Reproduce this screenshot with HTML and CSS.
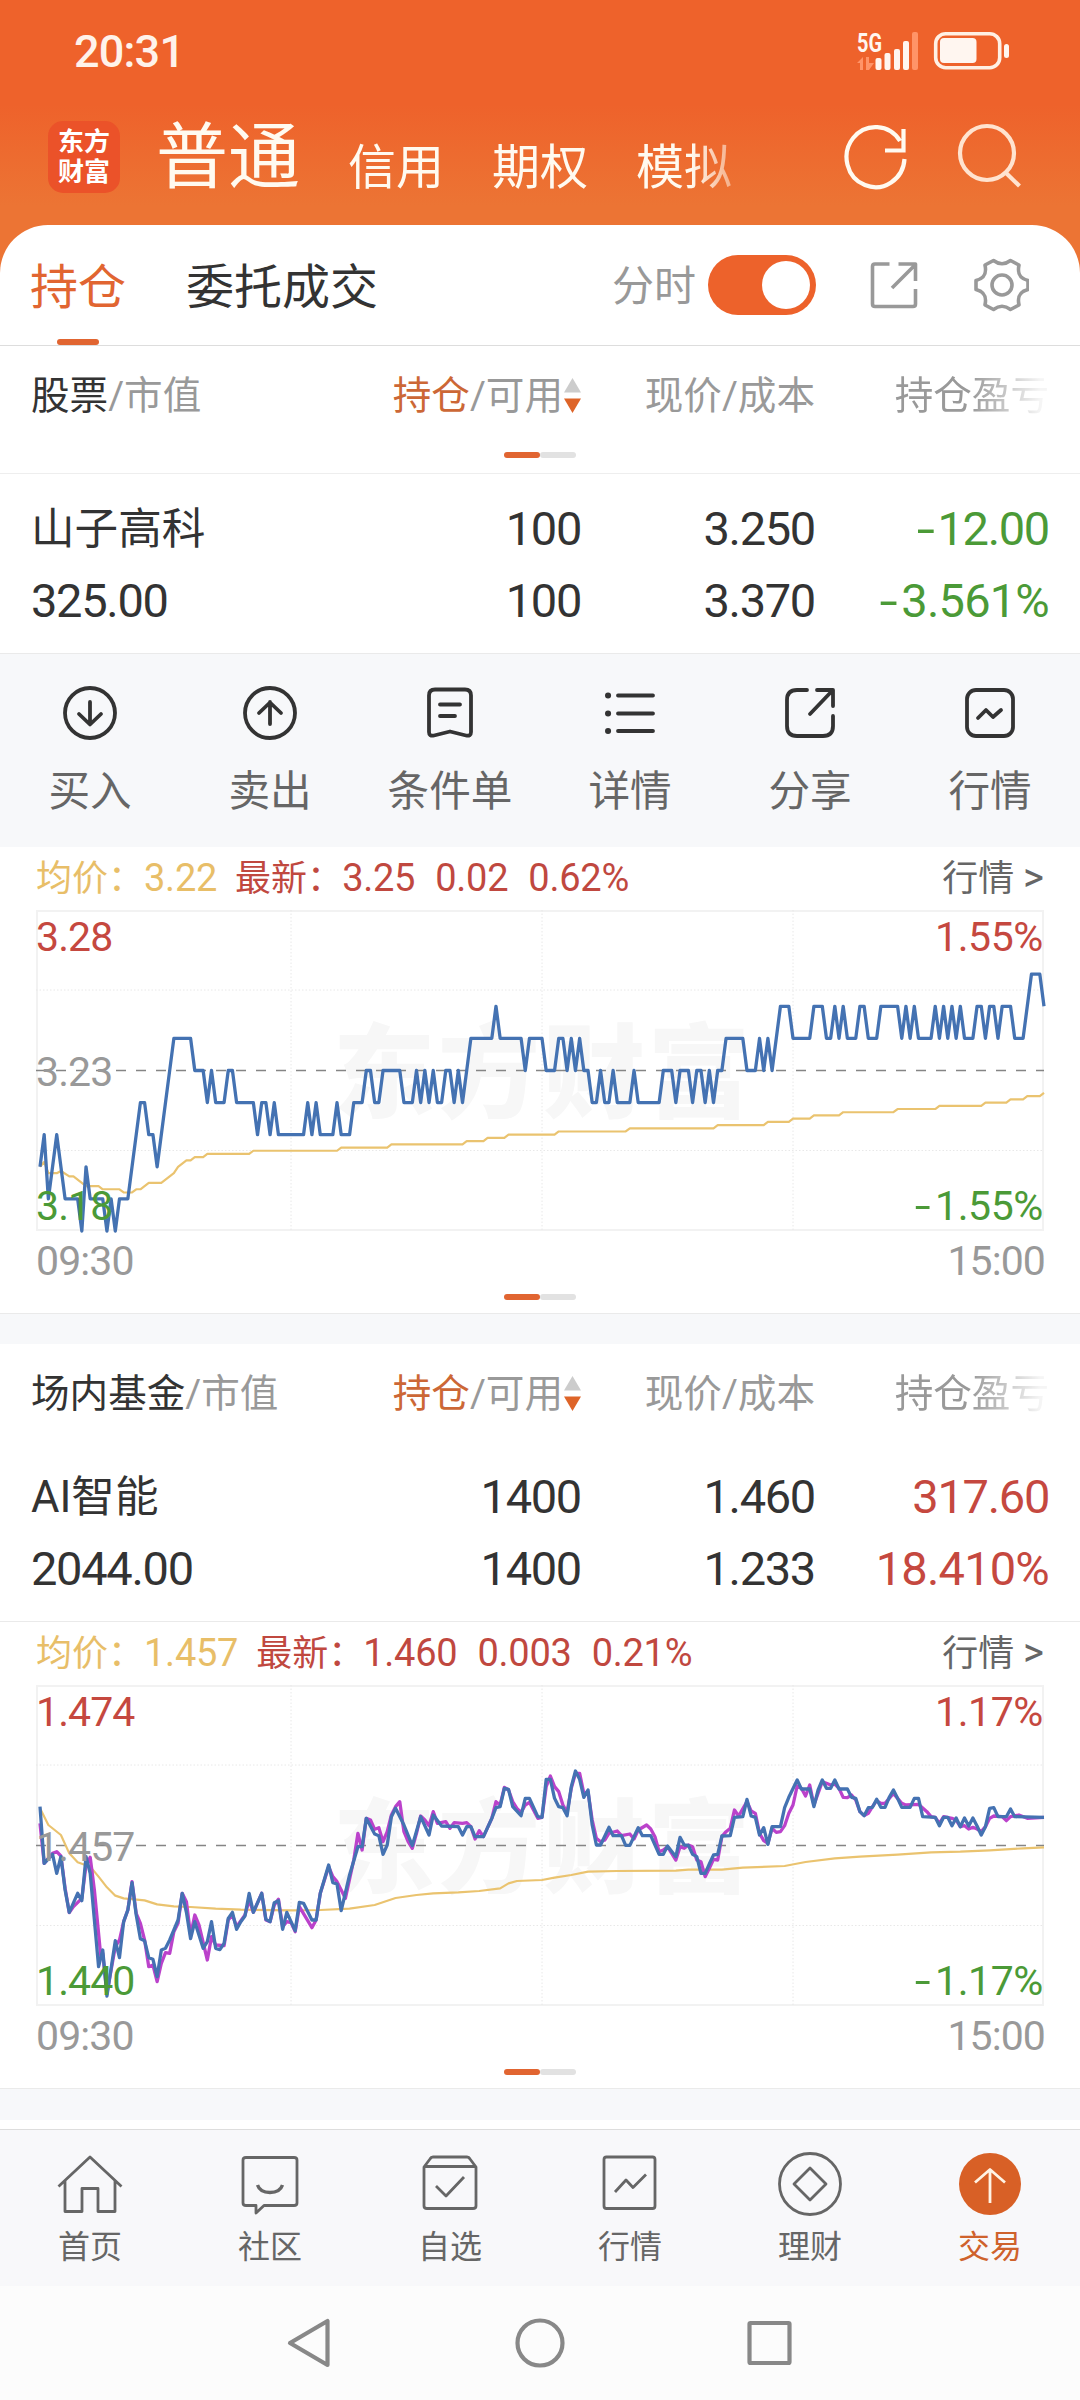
FILE: index.html
```html
<!DOCTYPE html>
<html lang="zh-CN">
<head>
<meta charset="utf-8">
<title>持仓</title>
<link rel="stylesheet" href="styles.css">
</head>
<body>
<header class="top">
  <div class="status">
    <span class="clock">20:31</span>
    <svg class="status-icons" width="160" height="40" viewBox="850 31 160 40">
      <text class="net" x="857" y="51.500" textLength="25" lengthAdjust="spacingAndGlyphs">5G</text>
      <g fill="#ff9468"><path d="M857 63l6-6v13h-3v-7zM866 57h3v6l5 0-5 7h-3z"/><rect x="912" y="32" width="6" height="38" rx="2"/></g>
      <g fill="#fff6f0"><rect x="875.500" y="58" width="6" height="12" rx="2"/><rect x="884.500" y="53" width="6" height="17" rx="2"/><rect x="894" y="49" width="6" height="21" rx="2"/><rect x="903" y="41" width="6" height="29" rx="2"/>
      <rect x="940" y="38" width="36.500" height="25" rx="4"/><rect x="1004" y="44" width="5" height="14" rx="2.500"/></g>
      <rect x="935.700" y="33.700" width="64" height="34" rx="10" fill="none" stroke="#fff0e4" stroke-width="3.600"/>
    </svg>
  </div>
  <div class="accounts">
    <div class="logo">东方<br>财富</div>
    <nav class="account-tabs"><b>普通</b><span>信用</span><span>期权</span><span>模拟</span></nav>
    <svg class="top-icons" width="180" height="72" viewBox="842 122 180 72" fill="none" stroke-width="4.200">
      <path stroke="#fffaf0" d="M904.500 160A29 30 0 1 1 900 142M903.500 130v21.500H885"/>
      <g stroke="#ffe3cf"><circle cx="987" cy="154" r="27"/><path d="M1005 173l14.500 14"/></g>
    </svg>
  </div>
</header>

<main>
  <div class="tabs">
    <span class="tab active">持仓</span><span class="tab">委托成交</span>
    <span class="minute">分时</span>
    <span class="toggle"></span>
    <svg class="tab-icons" width="160" height="60" viewBox="869 255 160 60" fill="none" stroke="#999" stroke-width="3.600" stroke-linejoin="round">
      <path d="M889.500 264H875q-2.500 0-2.500 2.500V304q0 2.500 2.500 2.500H913q2.500 0 2.500-2.500V289M898.500 264H915.500V281M915 265L892 288"/>
      <circle cx="1002" cy="285" r="10"/>
      <path d="M985 265L993.500 260.500Q1002 267 1010.500 260.500L1019 265C1017.500 272 1018.500 278 1028 280.500V289.500C1018.500 292 1017.500 298 1019 305L1010.500 309.500Q1002 303 993.500 309.500L985 305C986.500 298 985.500 292 976 289.500V280.500C985.500 278 986.500 272 985 265Z"/>
    </svg>
  </div>

  <section class="stock">
    <div class="cols head">
      <span><i>股票</i>/市值</span><span class="sorted"><em>持仓</em>/可用<svg width="17" height="36" viewBox="0 0 17 36"><path d="M8.500 0L17 14.500H0Z" fill="#ccc"/><path d="M8.500 35L17 20.500H0Z" fill="#de6428"/></svg></span><span>现价/成本</span><span class="fade">持仓盈亏</span>
    </div>
    <div class="pager"><i></i><i></i></div>
    <div class="holding">
      <div class="cols num"><span class="name">山子高科</span><span>100</span><span>3.250</span><span class="down"><s>-</s>12.00</span></div>
      <div class="cols num"><span>325.00</span><span>100</span><span>3.370</span><span class="down rate"><s>-</s>3.561%</span></div>
    </div>
    <div class="actions">
      <a><svg width="60" height="60" viewBox="-30 -30 60 60"><circle r="25"/><path d="M0-11V11M-11 1L0 11.500 11 1"/></svg>买入</a>
      <a><svg width="60" height="60" viewBox="-30 -30 60 60"><circle r="25"/><path d="M0 11V-11M-11 0L0-10.500 11 0"/></svg>卖出</a>
      <a><svg width="60" height="60" viewBox="-30 -30 60 60"><path d="M-15-23.500H15Q21-23.500 21-17.500V19Q21 23.500 16 22.500L0 18.500-16 22.500Q-21 23.500-21 19V-17.500Q-21-23.500-15-23.500ZM-10-8.500H10M-10 3H5"/></svg>条件单</a>
      <a><svg width="60" height="60" viewBox="-30 -30 60 60"><path d="M-12-17.500H23M-12 .5H23M-12 18H23"/><path stroke-width="6" d="M-22-17.500h.1M-22 .5h.1M-22 18h.1"/></svg>详情</a>
      <a><svg width="60" height="60" viewBox="-30 -30 60 60"><path d="M-3-23H-13Q-23-23-23-13V13Q-23 23-13 23H13Q23 23 23 13V3M7-23H23V-7M22-22L0 1"/></svg>分享</a>
      <a><svg width="60" height="60" viewBox="-30 -30 60 60"><rect x="-23" y="-23" width="46" height="46" rx="9"/><path d="M-12 5L-4-3 3 4 11-3"/></svg>行情</a>
    </div>
    <div class="legend"><span class="avg">均价：<b>3.22</b></span><span class="last">最新：<b>3.25</b><b>0.02</b><b>0.62%</b></span><span class="more">行情 <i>&gt;</i></span></div>
    <div class="chart">
      <div class="watermark">东方财富</div>
      <svg class="grid" width="1008" height="321"><path class="dots" d="M255 0V321M506 0V321M757 0V321M0 80H1008M0 240.500H1008"/><path class="mid" d="M0 160.500H1008"/></svg>
      <svg class="series" viewBox="0 -5 240 10" preserveAspectRatio="none">
        <polyline class="avg-line" points="0,3 1,2.850 2,3.200 4,3.200 5,3.130 7,3.300 8,3.300 11,3.600 14,3.600 15,3.700 19,3.700 20,3.800 22,3.800 23,3.700 24,3.700 26,3.500 29,3.500 32,3.200 33,3 35,2.800 36,2.800 37,2.700 39,2.700 40,2.600 50,2.600 51,2.500 71,2.500 72,2.400 83,2.400 84,2.300 101,2.300 102,2.200 106,2.200 107,2.100 111,2.100 112,2 123,2 124,1.900 140,1.900 141,1.800 161,1.800 162,1.700 173,1.700 174,1.600 179,1.600 180,1.500 184,1.500 185,1.400 191,1.400 192,1.300 204,1.300 205,1.200 214,1.200 215,1.100 225,1.100 226,1 231,1 232,.9 235,.9 236,.8 239,.8 240,.7"/>
        <polyline class="price-line" points="0,3 1,2 2,4 4,2 6,4 9,4 10,5 11,3 12,4 15,4 16,5 17,4 18,5 19,4 21,4 24,1 25,1 26,2 27,2 28,3 32,-1 36,-1 37,0 39,0 40,1 41,0 42,1 44,1 45,0 46,0 47,1 51,1 52,2 53,1 54,1 55,2 56,1 57,2 63,2 64,1 65,2 66,1 67,2 70,2 71,1 72,2 74,2 75,1 77,1 78,0 79,0 80,1 81,1 82,0 86,0 87,1 89,1 90,0 91,1 92,0 93,1 94,0 95,1 96,1 97,0 98,0 99,1 100,0 101,1 103,-1 108,-1 109,-2 110,-1 115,-1 116,0 117,-1 120,-1 121,0 123,0 124,-1 125,-1 126,0 127,-1 128,0 129,-1 130,0 131,0 132,1 133,1 134,0 135,1 136,1 137,0 138,1 141,1 142,0 143,1 148,1 149,0 151,0 152,1 153,0 155,0 156,1 157,0 158,0 159,1 160,0 161,1 162,0 163,0 164,-1 168,-1 169,0 171,0 172,-1 173,0 174,-1 175,0 177,-2 179,-2 180,-1 184,-1 185,-2 187,-2 188,-1 189,-1 190,-2 191,-1 192,-2 193,-1 195,-1 196,-2 197,-2 198,-1 200,-1 201,-2 205,-2 206,-1 207,-2 208,-1 209,-2 210,-1 213,-1 214,-2 215,-1 216,-2 217,-1 218,-2 219,-1 220,-2 221,-1 223,-1 224,-2 225,-2 226,-1 227,-2 228,-2 229,-1 230,-2 232,-2 233,-1 235,-1 237,-3 239,-3 240,-2"/>
      </svg>
      <div class="scale left"><span class="up">3.28</span><span>3.23</span><span class="down">3.18</span></div>
      <div class="scale right"><span class="up">1.55%</span><span class="down"><s>-</s>1.55%</span></div>
    </div>
    <div class="times"><span>09:30</span><span>15:00</span></div>
    <div class="pager end"><i></i><i></i></div>
  </section>

  <section class="stock fund">
    <div class="cols head">
      <span><i>场内基金</i>/市值</span><span class="sorted"><em>持仓</em>/可用<svg width="17" height="36" viewBox="0 0 17 36"><path d="M8.500 0L17 14.500H0Z" fill="#ccc"/><path d="M8.500 35L17 20.500H0Z" fill="#de6428"/></svg></span><span>现价/成本</span><span class="fade">持仓盈亏</span>
    </div>
    <div class="holding">
      <div class="cols num"><span class="name">AI智能</span><span>1400</span><span>1.460</span><span class="up">317.60</span></div>
      <div class="cols num"><span>2044.00</span><span>1400</span><span>1.233</span><span class="up rate">18.410%</span></div>
    </div>
    <div class="legend"><span class="avg">均价：<b>1.457</b></span><span class="last">最新：<b>1.460</b><b>0.003</b><b>0.21%</b></span><span class="more">行情 <i>&gt;</i></span></div>
    <div class="chart">
      <div class="watermark">东方财富</div>
      <svg class="grid" width="1008" height="321"><path class="dots" d="M255 0V321M506 0V321M757 0V321M0 80H1008M0 240.500H1008"/><path class="mid" d="M0 160.500H1008"/></svg>
      <svg class="series" viewBox="0 75 240 963" preserveAspectRatio="none">
        <polyline class="avg-line" points="0,445 2,495 5,525 7,580 9,607 12,620 14,650 16,682 18,707 20,715 25,721 28,733 32,739 36,741 42,746 48,749 60,751 67,750 74,746 80,735 85,714 90,705 94,700 100,697 105,693 110,685 112,670 114,663 120,660 123,653 127,645 131,635 138,633 152,632 155,629 163,629 168,623 178,618 183,606 190,595 196,590 205,584 213,577 220,575 227,571 235,565 240,562"/>
        <polyline class="nav-line" points="0,490 1,610 3,580 4,575 5,588 6,685 7,758 8,740 10,715 11,615 12,592 13,690 14.500,885 15,880 16,1000 18,860 19,840 20,785 21,750 22,665 23,760 24,790 25,840 26,920 27,915 28,965 29,910 30,878 31,880 32,815 33,790 34,700 35,725 36,825 37,765 38,795 40,900 41,830 42,855 44,857 45,780 46,765 47,800 49,765 50,720 51,757 53,700 54,780 55,785 56,735 57,718 58,800 59,785 60,788 61,815 62,740 65,803 66,780 67,700 69,620 70,650 71,665 73,715 75,600 76,520 77,570 78,475 79,480 80,508 81,503 82,545 83,515 84,465 85,440 86,425 87,515 88,545 89,565 90,520 91,468 92,480 93,497 94,455 95,490 97,485 98,505 99,488 101,490 102,488 103,500 104,537 105,512 106,530 108,475 109,425 110,435 111,382 112,390 113,425 114,445 115,457 116,435 117,427 119,475 120,472 121,380 122,348 123,380 124,395 125,435 126,457 127,385 128,340 129,340 130,400 131,395 132,480 133,535 134,545 135,540 136,520 138,513 139,527 141,522 142,537 143,510 145,495 146,507 147,530 148,575 149,570 150,560 151,580 152,600 153,560 154,565 155,555 156,560 157,600 158,605 159,650 160,625 161,598 162,600 163,530 164,515 165,505 166,450 167,468 169,425 170,453 171,460 172,520 173,542 174,550 175,505 176,517 177,515 178,497 179,460 180,435 181,378 182,385 183,408 184,375 185,435 187,365 188,370 189,375 190,372 191,385 192,412 193,413 194,405 195,420 196,455 197,467 198,460 199,440 200,422 201,430 202,430 203,415 204,400 205,415 206,430 207,435 210,433 212,455 213,470 214,472 215,490 216,470 218,475 219,480 220,500 221,497 222,507 223,502 224,507 225,515 226,500 227,475 228,468 230,470 231,482 232,470 234,465 236,475 240,472"/>
        <polyline class="price-line" points="0,440 1,610 3,583 4,640 5,590 6,690 7,757 9,700 10,722 11,590 12,640 14,920 15,870 16,1008 18,842 19,893 20,785 21,750 22,668 23,765 24,836 25,842 26,893 27,898 28,950 29,870 30,865 31,840 32,810 33,780 34,700 35,757 36,836 37,785 39,865 40,845 41,785 42,865 43,869 44,850 45,775 46,757 47,808 48,785 49,768 50,700 51,757 53,700 54,778 55,785 56,728 57,722 58,808 59,757 61,812 62,727 63,730 65,780 66,780 67,700 69,615 70,668 71,672 72,752 74,645 76,560 77,560 78,475 80,522 81,527 82,583 83,555 84,470 85,445 87,495 89,557 91,470 93,525 94,465 96,498 100,500 101,525 102,500 103,500 104,530 106,530 108,475 109,443 110,440 111,385 112,388 113,440 115,467 116,415 117,415 119,470 120,472 121,358 122,358 123,415 124,440 125,443 126,467 127,380 128,333 129,358 130,412 131,390 132,495 133,555 134,555 136,502 137,527 139,527 140,556 141,556 143,503 144,527 146,527 148,583 149,583 150,558 152,590 153,532 154,555 155,556 156,583 157,590 158,640 159,640 160,612 161,585 162,583 163,528 165,527 166,472 168,470 169,418 170,468 171,472 172,525 173,503 174,553 175,500 177,500 178,443 179,412 181,360 182,387 184,387 185,440 186,390 187,360 188,385 189,385 190,360 191,387 193,387 194,412 195,415 196,455 197,467 198,443 199,442 200,418 201,442 202,442 203,412 204,390 205,415 206,442 208,442 209,415 210,415 211,470 214,472 215,497 216,472 217,472 218,497 219,474 220,500 221,474 222,498 223,474 224,498 225,525 226,500 227,445 228,443 229,470 231,470 232,447 233,470 240,472"/>
      </svg>
      <div class="scale left"><span class="up">1.474</span><span>1.457</span><span class="down">1.440</span></div>
      <div class="scale right"><span class="up">1.17%</span><span class="down"><s>-</s>1.17%</span></div>
    </div>
    <div class="times"><span>09:30</span><span>15:00</span></div>
    <div class="pager end"><i></i><i></i></div>
  </section>
  <div class="next"></div>
</main>

<nav class="tabbar">
  <a><svg width="70" height="70" viewBox="-35 -35 70 70"><path d="M-31.500 2.500L0-27 31.500 2.500M-25-3V27.500H-8V4.500H8V27.500H25V-3"/></svg>首页</a>
  <a><svg width="70" height="70" viewBox="-35 -35 70 70"><path d="M-24-26.500H24Q27-26.500 27-24V19Q27 21.500 24 21.500H-6L-14 29V21.500H-24Q-27 21.500-27 19V-24Q-27-26.500-24-26.500Z"/><path stroke-width="3.400" d="M-12.500 1Q-10 8.500 0 8.500T12.500 1"/></svg>社区</a>
  <a><svg width="70" height="70" viewBox="-35 -35 70 70"><path d="M-26-17L-20-25Q-19-27-17-27H17Q19-27 20-25L26-17V22Q26 24.500 23 24.500H-23Q-26 24.500-26 22ZM-26-17.500H26M-14 2L-4 12 14-7"/></svg>自选</a>
  <a><svg width="70" height="70" viewBox="-35 -35 70 70"><rect x="-26" y="-27" width="51" height="51.500" rx="2.500"/><path d="M-15 8L-4-4 3 3.500 16-9.500"/></svg>行情</a>
  <a><svg width="70" height="70" viewBox="-35 -35 70 70"><circle r="30.500"/><path d="M0-16L16 0 0 16-16 0Z"/></svg>理财</a>
  <a class="on"><svg width="70" height="70" viewBox="-35 -35 70 70"><circle r="31" fill="#d86026" stroke="none"/><path stroke="#fff3e4" d="M0 19V-14.500M-15-1.500L0-14.500 15-1.500"/></svg>交易</a>
</nav>
<div class="sysnav">
  <svg width="560" height="60" viewBox="260 2313 560 60" fill="none" stroke="#888" stroke-width="4.200" stroke-linejoin="round"><path d="M290 2343L327.500 2321V2365Z"/><circle cx="540" cy="2343" r="22.500"/><rect x="749.500" y="2323" width="40" height="40" rx="1"/></svg>
</div>
</body>
</html>
```
FILE: styles.css
```css
* { box-sizing: border-box; }
body {
  margin: 0; width: 1080px; height: 2400px; overflow: hidden; background: #fff;
  font-family: Roboto, "Noto Sans CJK SC", sans-serif; color: #333;
  display: flex; flex-direction: column;
}
i, em { font-style: normal; }
b { font-weight: 400; }
s { text-decoration: none; display: inline-block; transform: scaleX(1.4); margin-right: 7px; }
.up { color: #c5483f; }
.down { color: #4b9a37; }

.top { height: 273px; flex: none; margin-bottom: -48px; background: linear-gradient(#ee622b 0, #ee622b 105px, #ec7434 205px, #ec7434); }
.status { height: 101px; padding: 0 70px 0 74px; display: flex; justify-content: space-between; align-items: center; }
.clock { font-size: 45px; font-weight: 500; color: #fff2ea; letter-spacing: -.8px; padding-top: 1px; }
.net { font: 700 26px Roboto, sans-serif; fill: #fff6f0; }
.accounts { height: 112px; display: flex; align-items: center; padding-left: 48px; }
.logo { width: 72px; height: 72px; border-radius: 15px; background: #eb5229; color: #fff; font: 700 26px/30px "Noto Sans CJK SC", sans-serif; padding-top: 4px; text-align: center; }
.account-tabs { margin-left: 36px; width: 580px; height: 112px; padding-top: 5px; display: flex; gap: 48px; align-items: baseline; font-size: 48px; line-height: 100px; color: #fffaf0; white-space: nowrap; -webkit-mask: linear-gradient(90deg, #000 535px, rgba(0,0,0,.4) 580px); mask: linear-gradient(90deg, #000 535px, rgba(0,0,0,.4) 580px); }
.account-tabs b { font-size: 72px; line-height: 104px; }
.account-tabs span { transform: translateY(2px); }
.top-icons { margin-left: auto; margin-right: 58px; }

main { flex: none; height: 1904px; background: #fff; border-radius: 48px 48px 0 0; overflow: hidden; }
.tabs { height: 121px; border-bottom: 1px solid #ddd; display: flex; align-items: center; padding: 0 51px 0 30px; font-size: 48px; position: relative; }
.tab, .minute { padding-bottom: 5px; }
.tab + .tab { margin-left: 60px; }
.tab.active { color: #e16531; }
.tab.active::after { content: ""; position: absolute; left: 57px; bottom: 0; width: 42px; height: 6px; border-radius: 3px; background: #e16531; }
.minute { margin-left: auto; font-size: 42px; color: #999; }
.toggle { width: 108px; height: 60px; margin: 0 53px 0 12px; border-radius: 30px; background: #ed622b; padding: 6px; display: flex; justify-content: flex-end; }
.toggle::after { content: ""; width: 48px; height: 48px; border-radius: 50%; background: #fff; }

.stock { border-bottom: 1px solid #eaeaea; }
.cols { display: grid; grid-template-columns: 1fr 234px 234px 234px; padding: 0 31px; }
.cols > * { text-align: right; white-space: nowrap; }
.cols > :first-child { text-align: left; }
.head { height: 98px; font-size: 38.600px; line-height: 100px; color: #999; }
.head i { color: #333; }
.head em { color: #cc6736; }
.sorted { display: flex; justify-content: flex-end; align-items: center; }
.sorted svg { margin-left: 1px; }
.fade { -webkit-mask: linear-gradient(90deg, #000 155px, rgba(0,0,0,.1) 225px); mask: linear-gradient(90deg, #000 155px, rgba(0,0,0,.1) 225px); }
.pager { height: 30px; display: flex; justify-content: center; align-items: center; border-bottom: 1px solid #eee; padding-bottom: 7px; }
.pager i { width: 36px; height: 6px; border-radius: 3px; background: #e2e2e2; }
.pager i:first-child { background: #e16531; }
.holding { height: 180px; padding-top: 19px; border-bottom: 1px solid #eaeaea; }
.num { height: 72px; line-height: 72px; font-size: 47px; letter-spacing: -1.300px; }
.num .rate { letter-spacing: -.8px; }
.num .name { font-size: 43.600px; letter-spacing: 0; line-height: 74px; }
.actions { height: 193px; background: #f7f8fa; display: grid; grid-template-columns: repeat(6, 180px); padding-top: 29px; }
.actions a { display: flex; flex-direction: column; align-items: center; font-size: 41.600px; line-height: 60px; gap: 19px; color: #666; }
.actions svg { fill: none; stroke: #333; stroke-width: 3.800; stroke-linecap: round; stroke-linejoin: round; }
.legend { height: 63px; display: flex; padding: 0 36px; font-size: 36px; line-height: 62px; }
.legend b { font-size: 38px; margin-right: 20px; letter-spacing: -.25px; }
.legend .avg b { margin-right: 18px; }
.avg { color: #e8be68; }
.last { color: #c0483f; }
.last b:first-of-type { margin-left: -1px; }
.more { margin-left: auto; color: #666; }
.more i { font-size: 40px; }
.chart { height: 321px; margin: 0 36px; position: relative; box-shadow: inset 0 0 0 2px #f2f2f2; }
.watermark { position: absolute; inset: 0; display: flex; justify-content: center; align-items: center; font: 900 102px/1 "Noto Sans CJK SC", sans-serif; letter-spacing: 3px; padding: 0 0 10px 6px; color: #f7f7f7; }
.grid, .series { position: absolute; left: 0; top: 0; overflow: visible; fill: none; }
.dots { stroke: #e8e8e8; stroke-dasharray: 1.500 2; }
.mid { stroke: #858585; stroke-width: 1.300; stroke-dasharray: 10 10; }
.series { left: 4px; width: 1004px; height: 321px; }
.series polyline { vector-effect: non-scaling-stroke; stroke-linejoin: round; }
.avg-line { stroke: #eac36f; stroke-width: 2.200; }
.price-line { stroke: #4472b2; stroke-width: 3.300; }
.nav-line { stroke: #bb42cb; stroke-width: 3.300; }
.scale { position: absolute; top: 3px; bottom: 1px; display: flex; flex-direction: column; justify-content: space-between; font-size: 41px; line-height: 48px; letter-spacing: -.9px; color: #999; }
.left { left: 0; }
.right { right: 1px; text-align: right; letter-spacing: -.4px; }
.times { height: 58px; display: flex; justify-content: space-between; padding: 0 35px 0 36px; font-size: 41px; line-height: 61px; letter-spacing: -.9px; color: #999; }
.end { height: 24px; border: 0; padding: 0 0 8px; }

.fund { border-top: 30px solid #f7f8fa; }
.next { height: 40px; border-top: 31px solid #f7f8fa; }
.tabbar { flex: none; height: 157px; background: #f8f8fa; border-top: 1px solid #ddd; display: grid; grid-template-columns: repeat(6, 180px); }
.tabbar a { display: flex; flex-direction: column; align-items: center; padding-top: 19px; font-size: 32px; line-height: 44px; gap: 6px; color: #666; }
.tabbar svg { fill: none; stroke: #666; stroke-width: 2.800; stroke-linejoin: round; }
.tabbar .on { color: #cf622c; }
.sysnav { flex: 1; background: #fcfcfc; display: flex; justify-content: center; align-items: center; }
```
